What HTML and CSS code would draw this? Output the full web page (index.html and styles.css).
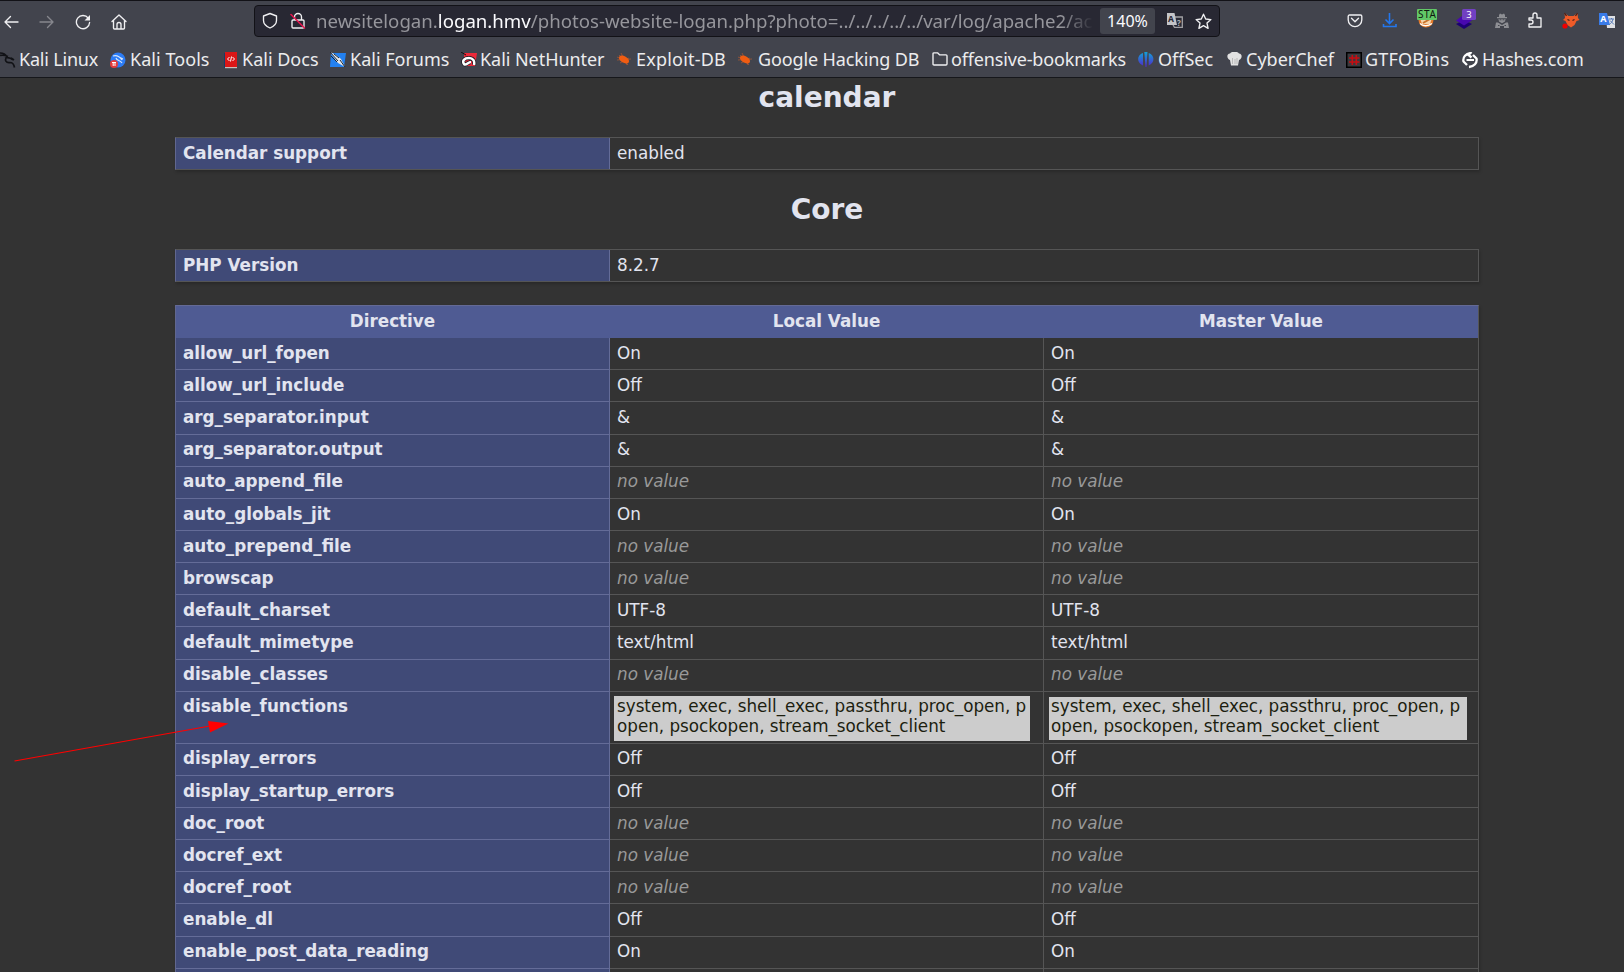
FILE: index.html
```html
<!DOCTYPE html>
<html lang="en">
<head>
<meta charset="utf-8">
<title>phpinfo()</title>
<link rel="stylesheet" href="styles.css">
</head>
<body>
<header class="chrome">
  <div class="toolbar">
    <nav class="nav">
      <svg width="16" height="16" viewBox="0 0 16 16" class="line"><path d="M15 8H2M7.500 2.500L2 8l5.500 5.500"/></svg>
      <svg width="16" height="16" viewBox="0 0 16 16" class="line dim"><path d="M1 8h13M8.500 2.500L14 8l-5.500 5.500"/></svg>
      <svg width="16" height="16" viewBox="0 0 16 16" class="line"><path d="M13.300 4.200A6.600 6.600 0 1 0 14.600 8.500"/><path class="solid" d="M15 1v5.500H9.500z"/></svg>
      <svg width="16" height="16" viewBox="0 0 16 16" class="line"><path d="M1 7.500L8 1l7 6.500M2.500 6.500v7.500a1 1 0 0 0 1 1h9a1 1 0 0 0 1-1V6.500M6 15v-4.500a2 2 0 0 1 4 0V15"/></svg>
    </nav>
    <div class="urlbar">
      <svg width="16" height="18" viewBox="0 0 16 18" class="line"><path d="M8 1.500l6.500 2.500v4.500c0 3.500-3 6-6.500 7.500-3.500-1.500-6.500-4-6.500-7.500V4z"/></svg>
      <svg width="16" height="18" viewBox="0 0 16 18" class="line lock"><path d="M4.500 8V5a3.500 3.500 0 0 1 7 0v3M3 8h10a1 1 0 0 1 1 1v6a1 1 0 0 1-1 1H3a1 1 0 0 1-1-1V9a1 1 0 0 1 1-1z"/><path class="strike" d="M1 2.500L14.500 16"/></svg>
      <div class="url">newsitelogan.<b>logan.hmv</b>/photos-website-logan.php?photo=../../../../../var/log/apache2/acc</div>
      <span class="zoom">140%</span>
      <svg class="translate" width="18" height="18" viewBox="0 0 18 18"><path fill="none" stroke="#a1a1a5" stroke-width="1.300" d="M9 5h7.300v10.300H8.500L7 13"/><path fill="#c4c4c8" d="M1 1h7.500l2.500 12H1z"/><text x="2" y="9.500" font-size="8.500" font-weight="bold" fill="#282833">A</text><text x="11" y="13.500" font-size="8" font-weight="bold" fill="#b4b4b8">?</text></svg>
      <svg class="star line" width="17" height="17" viewBox="0 0 17 17"><path d="M8.500 1.200l2.200 4.800 5.200.6-3.900 3.500 1.100 5.200-4.600-2.700-4.600 2.700L5 10.100 1.100 6.600l5.200-.6z"/></svg>
    </div>
    <div class="exts">
      <svg width="16" height="28" viewBox="0 0 16 28" class="line"><path d="M2.500 9h11a1.300 1.300 0 0 1 1.300 1.300v3.500a6.800 6.800 0 0 1-13.600 0v-3.500A1.300 1.300 0 0 1 2.500 9zM4.500 12.300L8 15.700l3.500-3.400"/></svg>
      <svg width="16" height="28" viewBox="0 0 16 28" fill="none" stroke="#2377ee" stroke-width="1.600"><path d="M7.500 7v10M3.500 13.500l4 4 4-4M1.500 18v2.500h12.500V18"/></svg>
      <svg width="20" height="28" viewBox="0 0 20 28"><circle cx="9" cy="14" r="7.500" fill="#e2792a"/><path fill="#f6d5ad" d="M3 12h12l-2 6H5z"/><path d="M6 17l7-4" stroke="#c9732c" stroke-width="2"/><path d="M3 17.500c3 3 8 3 12 0" stroke="#fff" stroke-width="1.300" fill="none"/><rect width="20" height="11" y="3" rx="1" fill="#62c767"/><text x="10" y="12" text-anchor="middle" font-size="10" textLength="18" fill="#101810">STA</text></svg>
      <svg width="20" height="28" viewBox="0 0 20 28"><path fill="#1d0074" d="M0 18l8-4 8 4-8 5z"/><path fill="#4808af" d="M0 14.500l8-6 8 6-8 5z"/><rect x="6" y="3" width="14" height="11" rx="1.500" fill="#7140c1"/><text x="13" y="12" text-anchor="middle" font-size="9.500" fill="#fff">3</text></svg>
      <svg width="14" height="28" viewBox="0 0 14 28" fill="#8d8e93"><path d="M4 9l1-1.500 2 1 2-1L10 9v2h2v1.200H2V11h2zM3.500 13h7l-.5 2.500-3 1.800-3-1.800zM1 16.500h2l4 2.500 4-2.500h2l1 5.500H9v-2H5v2H0z"/><path fill="#42444d" d="M4.500 13.300h2v1h-2zM7.500 13.300h2v1h-2zM3 19h1.500v1H3zM9.500 19H11v1H9.500z"/></svg>
      <svg width="15" height="28" viewBox="0 0 15 28" class="line"><path d="M1 12h4V9a2 2 0 0 1 4 0v3h4v9H1v-3h2a2 2 0 0 0 0-4H1z"/></svg>
      <svg width="18" height="28" viewBox="0 0 18 28"><path fill="#ef5b28" d="M2.500 7l4 3h5l4-3 .5 5 1.500 2-3 1-2 4-3.500 2.500L5.500 19l-2-4-2.500-1 2-2z"/><path d="M5.500 13.500l2 1M10.500 14.500l2-1M2.500 7l2 3M15.500 7l-2 3" stroke="#42201b" stroke-width="1.300"/><circle cx="3" cy="20" r="2.600" fill="#f00000"/></svg>
      <svg width="17" height="28" viewBox="0 0 17 28"><path fill="#dfe1e4" d="M7 10h9v12H8z"/><path fill="#397be8" d="M0 7h8l3 12H0z"/><text x="1.200" y="16" font-size="9" font-weight="bold" fill="#fff">A</text><path d="M10 13h5M12.500 12v1M14 13c-.5 3-2 4-4 6M11 14.500l4 4" stroke="#5579b7" fill="none"/></svg>
    </div>
  </div>
  <div class="bookmarks">
    <a><svg width="16" height="18" viewBox="0 0 16 18" fill="none" stroke="#111216" stroke-width="1.500"><path d="M0 1c4 0 6 2 7 4M0 3.500c3-1 6 0 8 1M5 6c3-1 6 0 8 2M7 5c-3 3-1 6 3 5.500 3 0 4 2 4.500 5M11 6l3 2" stroke-width="1.700"/></svg><span>Kali Linux</span></a>
    <a><svg width="16" height="18" viewBox="0 0 16 18"><circle cx="8" cy="8" r="7.500" fill="#2c7cf5"/><path d="M3 4c4-1 7 1 9 4M6 6c1 3 4 2 6 5M9 5l4 2" stroke="#d6e5fa" fill="none" stroke-width="1.200"/><circle cx="4" cy="12" r="4" fill="#e33c3c"/><path d="M2 10.500h4M3.200 10v4M5 10v4" stroke="#fff"/></svg><span>Kali Tools</span></a>
    <a><svg width="14" height="18" viewBox="0 0 14 18"><path fill="#173e69" d="M0 1h3v15H0z"/><path fill="#db1717" d="M1 0h12v15H1z"/><path fill="#c9c0bb" d="M1 15h12v1.200H1z"/><path d="M5.500 5l-2 2 2 2M8.500 5l2 2-2 2M7.500 4.500l-1 5" stroke="#fff" fill="none"/></svg><span>Kali Docs</span></a>
    <a><svg width="16" height="18" viewBox="0 0 16 18"><path fill="#2381f1" d="M1 1h15l-2 14H0z"/><path fill="#e5e8ec" d="M0 0l6 3 5 4 4 8-7-4z"/><path d="M0 0l8 9M4 2l5 4M10 8l5 7M1 4l6 6" stroke="#202831" fill="none"/></svg><span>Kali Forums</span></a>
    <a><svg width="16" height="18" viewBox="0 0 16 18"><path fill="#ed2939" d="M3 1h13l-2 13H3z"/><path d="M13 13c1-4-1-7-5-7-5 0-7 3-5 6 2 2 4-2 7-2" stroke="#17191f" fill="none" stroke-width="4"/><path d="M13 13c1-4-1-7-5-7-5 0-7 3-5 6 2 2 4-2 7-2" stroke="#fff" fill="none" stroke-width="2.500"/><path d="M0 0l5 3" stroke="#111"/></svg><span>Kali NetHunter</span></a>
    <a><svg width="16" height="18" viewBox="0 0 16 18"><path d="M0 5l12 5M0 8l14-1M4 1l6 12M2 3l9 10M3 11l9-5" stroke="#a45735" stroke-width=".8"/><ellipse cx="7" cy="7.500" rx="5.500" ry="3.300" transform="rotate(30 7 7.500)" fill="#f05c12"/></svg><span>Exploit-DB</span></a>
    <a><svg width="16" height="18" viewBox="0 0 16 18"><path d="M0 5l12 5M0 8l14-1M4 1l6 12M2 3l9 10M3 11l9-5" stroke="#a45735" stroke-width=".8"/><ellipse cx="7" cy="7.500" rx="5.500" ry="3.300" transform="rotate(30 7 7.500)" fill="#f05c12"/></svg><span>Google Hacking DB</span></a>
    <a><svg width="16" height="18" viewBox="0 0 16 18" class="line"><path d="M1 12V1.800a1 1 0 0 1 1-1h3.500l2 2H14a1 1 0 0 1 1 1V12a1 1 0 0 1-1 1H2a1 1 0 0 1-1-1"/></svg><span>offensive-bookmarks</span></a>
    <a><svg width="16" height="18" viewBox="0 0 16 18"><defs><linearGradient id="os" x2="0" y2="1"><stop stop-color="#12a2d8"/><stop offset="1" stop-color="#5227c9"/></linearGradient></defs><path fill="url(#os)" d="M5 1v12.500C-1.500 11-1.500 3 5 1zM6.300 0h3.200L8.500 15h-1zM10.700 1v12.500C17 11 17 3 10.700 1z"/></svg><span>OffSec</span></a>
    <a><svg width="16" height="18" viewBox="0 0 16 18"><path fill="#e2e2e2" d="M3 8C0 7-1 2 3 1.500c2-2.500 7-2.500 9 0 4 .5 3 5.500 0 6.500l-1 5.500H4z"/><path d="M5.500 6v6M8 7v5M10 6v6" stroke="#b9b9b9"/></svg><span>CyberChef</span></a>
    <a><svg width="16" height="18" viewBox="0 0 16 18"><path fill="#3a3a3e" stroke="#000" stroke-width="1.500" d="M.75.75h14.500v14.500H.75z"/><path d="M6.300 3v10M10.300 3v10M3 6h10.500M3 10h10.500" stroke="#c70d12" stroke-width="1.600"/></svg><span>GTFOBins</span></a>
    <a><svg width="16" height="18" viewBox="0 0 16 18" fill="none" stroke="#fff" stroke-width="2.300"><path d="M9 1C4 1.500.5 5 1.500 9.500L5 13M7 15c5-.5 8.500-4 7.500-8.500L11 3M9.500 0L6.500 3l3 2.500"/><path d="M4.500 8h7.500" stroke-width="2"/></svg><span>Hashes.com</span></a>
  </div>
</header>
<main class="page">
  <h2>calendar</h2>
  <section class="table"><div class="row pair"><b>Calendar support</b><span>enabled</span></div></section>
  <h2>Core</h2>
  <section class="table"><div class="row pair"><b>PHP Version</b><span>8.2.7</span></div></section>
  <section class="table directives">
    <div class="row head"><b>Directive</b><b>Local Value</b><b>Master Value</b></div>
    <div class="row"><b>allow_url_fopen</b><span>On</span><span>On</span></div>
    <div class="row"><b>allow_url_include</b><span>Off</span><span>Off</span></div>
    <div class="row"><b>arg_separator.input</b><span>&amp;</span><span>&amp;</span></div>
    <div class="row"><b>arg_separator.output</b><span>&amp;</span><span>&amp;</span></div>
    <div class="row"><b>auto_append_file</b><span><i>no value</i></span><span><i>no value</i></span></div>
    <div class="row"><b>auto_globals_jit</b><span>On</span><span>On</span></div>
    <div class="row"><b>auto_prepend_file</b><span><i>no value</i></span><span><i>no value</i></span></div>
    <div class="row"><b>browscap</b><span><i>no value</i></span><span><i>no value</i></span></div>
    <div class="row"><b>default_charset</b><span>UTF-8</span><span>UTF-8</span></div>
    <div class="row"><b>default_mimetype</b><span>text/html</span><span>text/html</span></div>
    <div class="row"><b>disable_classes</b><span><i>no value</i></span><span><i>no value</i></span></div>
    <div class="row tall"><b>disable_functions</b><span><mark>system, exec, shell_exec, passthru, proc_open, p<br>open, psockopen, stream_socket_client</mark></span><span><mark class="second">system, exec, shell_exec, passthru, proc_open, p<br>open, psockopen, stream_socket_client</mark></span></div>
    <div class="row"><b>display_errors</b><span>Off</span><span>Off</span></div>
    <div class="row"><b>display_startup_errors</b><span>Off</span><span>Off</span></div>
    <div class="row"><b>doc_root</b><span><i>no value</i></span><span><i>no value</i></span></div>
    <div class="row"><b>docref_ext</b><span><i>no value</i></span><span><i>no value</i></span></div>
    <div class="row"><b>docref_root</b><span><i>no value</i></span><span><i>no value</i></span></div>
    <div class="row"><b>enable_dl</b><span>Off</span><span>Off</span></div>
    <div class="row"><b>enable_post_data_reading</b><span>On</span><span>On</span></div>
    <div class="row"><b></b><span></span><span></span></div>
  </section>
</main>
<svg class="arrow" width="220" height="50" viewBox="0 0 220 50"><path d="M4.500 41L200 6" stroke="#f00" stroke-width="1.200"/><path fill="#f00" d="M198 1l20.500 2.500-18.500 9z"/></svg>
</body>
</html>
```
FILE: styles.css
```css
* { box-sizing: border-box; }
html, body { margin: 0; height: 972px; overflow: hidden; }
body { position: relative; background: #333; color: #e2e4ef; font-family: "DejaVu Sans", sans-serif; }
svg { display: block; flex: none; }

.chrome { height: 78px; background: #42444d; border-top: 1px solid #121217; border-bottom: 1px solid #16171b; font-family: "Noto Sans", sans-serif; }
.line { fill: none; stroke: #f0f0f2; stroke-width: 1.35; stroke-linejoin: round; stroke-linecap: round; }
.line.dim { stroke: #86878d; }
.line .solid { fill: #f0f0f2; stroke: none; }
.line .strike { stroke: #e5174f; stroke-width: 1.6; }

.toolbar { height: 40px; padding-top: 4px; display: flex; }
.nav { display: flex; gap: 20px; width: 254px; padding: 9px 0 0 3px; }
.urlbar { width: 966px; height: 32px; display: flex; align-items: center; background: #282833; border: 1px solid #121217; border-radius: 4px; padding-left: 7px; }
.lock { margin-left: 12px; }
.url { width: 778px; margin-left: 10px; font-size: 18.65px; line-height: 32px; white-space: nowrap; overflow: hidden; color: #96969c; -webkit-mask-image: linear-gradient(90deg, #000 745px, transparent 778px); mask-image: linear-gradient(90deg, #000 745px, transparent 778px); }
.url b { color: #fbfbfe; font-weight: 400; }
.zoom { width: 55px; height: 26px; margin-left: 6px; background: #42444d; border-radius: 3px; color: #fbfbfe; font-size: 16px; line-height: 26px; text-align: center; }
.translate { margin-left: 11px; }
.star { margin-left: 11px; }
.exts { display: flex; flex: 1; padding: 1px 8px 0 127px; justify-content: space-between; }

.bookmarks { display: grid; height: 36px; grid-template-columns: 110px 114px 106px 131px 156px 121px 194px 206px 89px 119px 116px 150px; color: #ececee; font-size: 18px; line-height: 36px; white-space: nowrap; }
.bookmarks a { display: flex; }
.bookmarks svg { margin-top: 11px; }
.bookmarks span { margin-left: 4px; }
.bookmarks a:nth-child(1) span { margin-left: 3px; letter-spacing: -.2px; }
.bookmarks a:nth-child(2) span { letter-spacing: .05px; }
.bookmarks a:nth-child(5) span { margin-left: 3px; letter-spacing: -.05px; }
.bookmarks a:nth-child(6) span { margin-left: 3px; letter-spacing: .2px; }
.bookmarks a:nth-child(7) span { letter-spacing: -.12px; }
.bookmarks a:nth-child(8) span { margin-left: 3px; letter-spacing: -.16px; }
.bookmarks a:nth-child(10) span { margin-left: 3px; }
.bookmarks a:nth-child(11) span { margin-left: 3px; letter-spacing: .2px; }
.bookmarks a:nth-child(12) span { letter-spacing: -.15px; }

.page { width: 1304px; margin-left: 175px; }
h2 { margin: 0; font-size: 28px; line-height: 34px; text-align: center; height: 59px; padding-top: 3px; }
.table + h2 { height: 79px; padding-top: 23px; }
.table { border: 1px solid #555; border-left-color: #61678f; box-shadow: 1px 2px 3px rgba(0, 0, 0, .2); font-size: 16.8px; line-height: 20px; }
.directives { margin-top: 23px; height: 680px; border-top-color: #646a95; }
.row { display: grid; grid-template-columns: 434px 434px 434px; height: 32.15px; }
.row > * { padding: 4.7px 7px 0; border-right: 1px solid #555; border-bottom: 1px solid #555; }
.row > :last-child { border-right: 0; }
.row > b { background: #404a77; border-color: #646c98; }
.pair { grid-template-columns: 434px 868px; height: 31px; }
.pair > * { padding-top: 5px; border-bottom: 0; }
.head { height: 32.15px; text-align: center; }
.row.head > b { background: #4f5b93; border-color: #4f5b93; }
.tall { height: 52px; }
i { color: #999; }
mark { display: block; width: 416px; height: 45px; margin: 0 0 0 -3px; padding-left: 3px; background: #ccc; color: #1c1e10; white-space: nowrap; letter-spacing: -.02px; }
mark.second { width: 419px; height: 44px; background: linear-gradient(#ccc, #ccc) 1px 1px / 418px 43px no-repeat; }
.arrow { position: absolute; left: 10px; top: 720px; }
```
